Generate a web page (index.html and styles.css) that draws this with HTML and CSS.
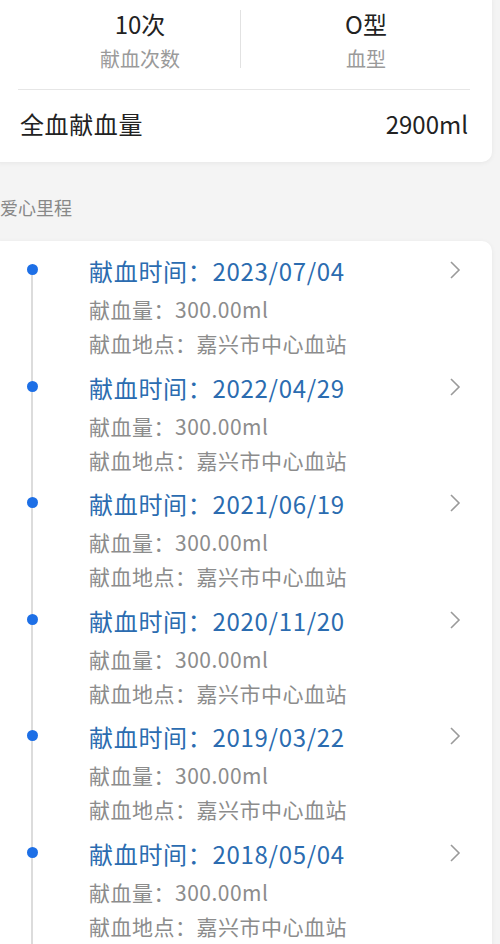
FILE: index.html
```html
<!DOCTYPE html>
<html lang="zh-CN">
<head>
    <meta charset="UTF-8">
    <meta name="viewport" content="width=device-width, initial-scale=1.0">
    <link rel="stylesheet" href="styles.css">
    <title>献血记录</title>
</head>
<body>

    <!-- 顶部统计卡片 -->
    <div class="card summary">
        <div class="stats">
            <div class="stat">
                <div class="stat-value">10次</div>
                <div class="stat-label">献血次数</div>
            </div>
            <div class="stat-divider"></div>
            <div class="stat">
                <div class="stat-value">O型</div>
                <div class="stat-label">血型</div>
            </div>
        </div>
        <div class="total">
            <span>全血献血量</span>
            <span class="total-value">2900ml</span>
        </div>
    </div>

    <div class="section-title">爱心里程</div>

    <!-- 献血记录列表 -->
    <div class="card records">
        <div class="item">
            <div class="rail"><span class="dot"></span></div>
            <div class="info">
                <div class="date">献血时间：2023/07/04</div>
                <div class="sub">献血量：300.00ml</div>
                <div class="sub">献血地点：嘉兴市中心血站</div>
            </div>
            <svg class="arrow" width="12" height="20" viewBox="0 0 12 20"><polyline points="2,2 10,10 2,18" /></svg>
        </div>
        <div class="item">
            <div class="rail"><span class="dot"></span></div>
            <div class="info">
                <div class="date">献血时间：2022/04/29</div>
                <div class="sub">献血量：300.00ml</div>
                <div class="sub">献血地点：嘉兴市中心血站</div>
            </div>
            <svg class="arrow" width="12" height="20" viewBox="0 0 12 20"><polyline points="2,2 10,10 2,18" /></svg>
        </div>
        <div class="item">
            <div class="rail"><span class="dot"></span></div>
            <div class="info">
                <div class="date">献血时间：2021/06/19</div>
                <div class="sub">献血量：300.00ml</div>
                <div class="sub">献血地点：嘉兴市中心血站</div>
            </div>
            <svg class="arrow" width="12" height="20" viewBox="0 0 12 20"><polyline points="2,2 10,10 2,18" /></svg>
        </div>
        <div class="item">
            <div class="rail"><span class="dot"></span></div>
            <div class="info">
                <div class="date">献血时间：2020/11/20</div>
                <div class="sub">献血量：300.00ml</div>
                <div class="sub">献血地点：嘉兴市中心血站</div>
            </div>
            <svg class="arrow" width="12" height="20" viewBox="0 0 12 20"><polyline points="2,2 10,10 2,18" /></svg>
        </div>
        <div class="item">
            <div class="rail"><span class="dot"></span></div>
            <div class="info">
                <div class="date">献血时间：2019/03/22</div>
                <div class="sub">献血量：300.00ml</div>
                <div class="sub">献血地点：嘉兴市中心血站</div>
            </div>
            <svg class="arrow" width="12" height="20" viewBox="0 0 12 20"><polyline points="2,2 10,10 2,18" /></svg>
        </div>
        <div class="item">
            <div class="rail"><span class="dot"></span></div>
            <div class="info">
                <div class="date">献血时间：2018/05/04</div>
                <div class="sub">献血量：300.00ml</div>
                <div class="sub">献血地点：嘉兴市中心血站</div>
            </div>
            <svg class="arrow" width="12" height="20" viewBox="0 0 12 20"><polyline points="2,2 10,10 2,18" /></svg>
        </div>
    </div>

</body>
</html>
```

FILE: styles.css
```css
/* 页面基础 */
body {
    margin: 0;
    background: #f4f4f4;
    font-family: "Noto Sans CJK SC", "Noto Sans", sans-serif;
    color: #222;
    overflow: hidden;
}

/* 卡片左侧超出屏幕 */
.card {
    background: #fff;
    margin-left: -10px;
    margin-right: 8px;
    padding-left: 10px;
    border-radius: 10px;
    box-shadow: 0 1px 5px rgba(0, 0, 0, 0.06);
}

.summary {
    margin-top: -10px;
    padding-top: 10px;
}

/* 统计 */
.stats {
    display: grid;
    grid-template-columns: 200px 1px 250px;
    margin-left: 40px;
    padding-top: 7px;
}

.stat {
    text-align: center;
}

.stat-value {
    font-size: 24px;
    line-height: 34px;
    color: #222;
}

.stat-label {
    font-size: 20px;
    line-height: 32px;
    margin-top: 2px;
    color: #9a9a9a;
}

.stat-divider {
    align-self: start;
    margin-top: 3px;
    height: 58px;
    background: #e2e2e2;
}

.total {
    display: flex;
    justify-content: space-between;
    margin: 14px 22px 0 18px;
    border-top: 1px solid #e6e6e6;
    padding: 17px 2px 21px 2px;
    font-size: 24px;
    line-height: 34px;
    letter-spacing: 0.6px;
}

.total-value {
    letter-spacing: 0;
}

.section-title {
    margin: 32px 0 21px 0;
    font-size: 18px;
    line-height: 26px;
    color: #888;
}

/* 记录列表 */
.records {
    padding-top: 12px;
    border-bottom-left-radius: 0;
    border-bottom-right-radius: 0;
    min-height: 720px;
}

.item {
    display: flex;
    align-items: flex-start;
}

.rail {
    width: 64px;
    flex: none;
    align-self: stretch;
    display: flex;
    justify-content: center;
    align-items: flex-start;
    padding-top: 11px;
    background: linear-gradient(#dcdcdc, #dcdcdc) no-repeat center top / 2px 100%;
}

.item:first-child .rail {
    background-position: center 16px;
}

.item:last-child .rail {
    background-size: 2px 300px;
}

.dot {
    width: 11px;
    height: 11px;
    border-radius: 50%;
    background: #1d6fe6;
}

.info {
    flex: 1;
    margin-left: 25px;
    padding-bottom: 9.6px;
}

.date {
    font-size: 24px;
    line-height: 36px;
    letter-spacing: 0.7px;
    color: #2b6cb0;
    margin-bottom: 3px;
}

.sub {
    font-size: 21px;
    line-height: 34px;
    letter-spacing: 0.5px;
    color: #8c8c8c;
}

.arrow {
    flex: none;
    margin: 7px 31px 0 0;
    fill: none;
    stroke: #9a9a9a;
    stroke-width: 1.6;
}
```
